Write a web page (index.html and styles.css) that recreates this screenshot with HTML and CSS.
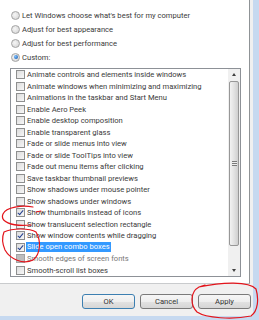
FILE: index.html
```html
<!DOCTYPE html>
<html lang="en">
<head>
    <meta charset="UTF-8">
    <meta name="viewport" content="width=device-width, initial-scale=1.0">
    <title>Performance Options</title>
    <link rel="stylesheet" href="styles.css">
</head>
<body>
    <div class="dialog">
        <!-- Tab page with the visual effects options -->
        <div class="tabpage">
            <div class="radios">
                <label class="radio-row"><span class="radio"></span>Let Windows choose what's best for my computer</label>
                <label class="radio-row"><span class="radio"></span>Adjust for best appearance</label>
                <label class="radio-row"><span class="radio"></span>Adjust for best performance</label>
                <label class="radio-row"><span class="radio checked"></span>Custom:</label>
            </div>

            <div class="listbox">
                <ul class="items">
                    <li><span class="box"></span>Animate controls and elements inside windows</li>
                    <li><span class="box"></span>Animate windows when minimizing and maximizing</li>
                    <li><span class="box"></span>Animations in the taskbar and Start Menu</li>
                    <li><span class="box"></span>Enable Aero Peek</li>
                    <li><span class="box"></span>Enable desktop composition</li>
                    <li><span class="box"></span>Enable transparent glass</li>
                    <li><span class="box"></span>Fade or slide menus into view</li>
                    <li><span class="box"></span>Fade or slide ToolTips into view</li>
                    <li><span class="box"></span>Fade out menu items after clicking</li>
                    <li><span class="box"></span>Save taskbar thumbnail previews</li>
                    <li><span class="box"></span>Show shadows under mouse pointer</li>
                    <li><span class="box"></span>Show shadows under windows</li>
                    <li><span class="box checked"></span>Show thumbnails instead of icons</li>
                    <li><span class="box"></span>Show translucent selection rectangle</li>
                    <li><span class="box checked"></span>Show window contents while dragging</li>
                    <li><span class="box checked"></span><span class="selected">Slide open combo boxes</span></li>
                    <li class="dim"><span class="box grey"></span>Smooth edges of screen fonts</li>
                    <li><span class="box"></span>Smooth-scroll list boxes</li>
                </ul>

                <!-- Scrollbar -->
                <div class="scrollbar">
                    <div class="arrow up"></div>
                    <div class="track">
                        <div class="thumb"><span class="grip"></span></div>
                    </div>
                    <div class="arrow down"></div>
                </div>
            </div>
        </div>

        <!-- Dialog buttons -->
        <div class="buttons">
            <button class="default">OK</button>
            <button>Cancel</button>
            <button>Apply</button>
        </div>
    </div>

    <!-- Red hand-drawn marks over the screenshot -->
    <svg class="marks" width="259" height="320" viewBox="0 0 259 320">
        <path d="M33,207 C22,205 6,207 3,214 C0,221 10,227 31,225" />
        <path d="M36,212 L41,211" />
        <path d="M4,232 C12,228 30,228 36,232 C41,240 41,254 33,260 C23,265 10,259 5,250 C2,243 2,237 4,232" />
        <path d="M199,287 C222,282 249,281 256,289 C259,299 258,311 251,316 C232,320 206,318 197,312 C190,305 190,292 199,287 L205,285" />
    </svg>
</body>
</html>
```

FILE: styles.css
```css
/* Page and window frame */
body {
    margin: 0;
    background-color: #c6d9f0;
    font-family: Roboto, "Liberation Sans", sans-serif;
    font-size: 7.6px;
    color: #3a3a3a;
    overflow: hidden;
    position: relative;
    height: 320px;
}

.dialog {
    width: 253px;
    height: 316px;
    background-color: #f0f0f0;
}

/* White tab page */
.tabpage {
    box-sizing: border-box;
    width: 250px;
    height: 284px;
    background-color: #fff;
    border-right: 1px solid #8f9396;
    border-bottom: 1px solid #c9cbcd;
    padding-top: 8px;
}

/* Radio buttons */
.radios {
    padding-left: 11px;
}

.radio-row {
    display: flex;
    align-items: center;
    height: 14px;
}

.radio {
    box-sizing: border-box;
    width: 9px;
    height: 9px;
    border-radius: 50%;
    border: 1px solid #a4a4a4;
    background: radial-gradient(circle at 40% 40%, #f6f6f6, #d0d0d0);
    margin-right: 2px;
    position: relative;
}

.radio.checked::after {
    content: "";
    position: absolute;
    left: 1.5px;
    top: 1.5px;
    width: 4px;
    height: 4px;
    border-radius: 50%;
    background: radial-gradient(circle at 35% 35%, #7fc2ff, #0b4fa8);
}

/* List box with checkboxes */
.listbox {
    box-sizing: border-box;
    display: flex;
    margin: 4px 0 0 10px;
    width: 231px;
    height: 209px;
    border: 1px solid #8d9197;
}

.items {
    flex: 1;
    list-style: none;
    margin: 0;
    padding: 0;
}

.items li {
    display: flex;
    align-items: center;
    height: 11.5px;
    padding-left: 5px;
    white-space: nowrap;
    overflow: hidden;
}

.items li.dim {
    color: #777;
}

.box {
    box-sizing: border-box;
    flex: none;
    width: 9px;
    height: 9px;
    border: 1px solid #8e8f8f;
    background: linear-gradient(135deg, #dcdcdc, #f7f7f7);
    margin-right: 2px;
    position: relative;
}

.box.checked::after {
    content: "";
    position: absolute;
    left: 2px;
    top: 0;
    width: 2px;
    height: 5px;
    border-right: 1.2px solid #24408f;
    border-bottom: 1.2px solid #24408f;
    transform: rotate(40deg);
}

.box.grey {
    background: #bdbdbd;
    border-color: #a3a3a3;
}

.selected {
    background-color: #3399ff;
    color: #fff;
    padding: 0 1px;
    margin-left: -1px;
    line-height: 10px;
}

/* Scrollbar */
.scrollbar {
    display: flex;
    flex-direction: column;
    width: 12px;
    background-color: #f0f0f0;
}

.arrow {
    height: 11px;
    display: flex;
    align-items: center;
    justify-content: center;
}

.arrow::after {
    content: "";
    border-left: 2.5px solid transparent;
    border-right: 2.5px solid transparent;
}

.arrow.up::after {
    border-bottom: 3px solid #404040;
}

.arrow.down::after {
    border-top: 3px solid #404040;
}

.track {
    flex: 1;
    padding-top: 1px;
}

.thumb {
    box-sizing: border-box;
    height: 165px;
    margin: 0 1px;
    border: 1px solid #979797;
    border-radius: 2px;
    background: linear-gradient(to right, #f2f2f2, #e2e2e2 50%, #cfcfcf);
    display: flex;
    align-items: center;
    justify-content: center;
}

.grip {
    width: 5px;
    height: 5px;
    background: repeating-linear-gradient(to bottom, #7a7a7a 0 1px, #eeeeee 1px 2px);
}

/* Button row */
.buttons {
    display: flex;
    justify-content: flex-end;
    gap: 5px;
    padding: 10px 2px 0 0;
}

.buttons button {
    box-sizing: border-box;
    width: 53px;
    height: 15px;
    padding: 0;
    font-family: inherit;
    font-size: 7.6px;
    color: #333;
    border: 1px solid #7a7a7a;
    border-radius: 3px;
    background: linear-gradient(to bottom, #f6f6f6 0%, #eeeeee 50%, #e2e2e2 51%, #d6d6d6 100%);
}

.buttons button.default {
    border-color: #3c7fb1;
}

/* Red marks lie over the screenshot */
.marks {
    position: absolute;
    left: 0;
    top: 0;
    pointer-events: none;
}

.marks path {
    fill: none;
    stroke: #e3141b;
    stroke-width: 1.2;
    stroke-linecap: round;
}
```
